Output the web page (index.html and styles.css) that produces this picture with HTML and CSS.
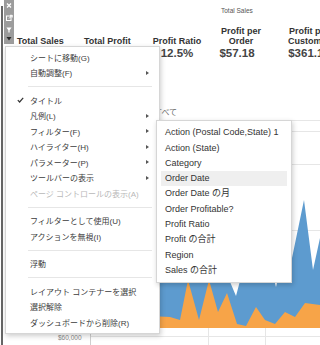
FILE: index.html
```html
<!DOCTYPE html>
<html>

<head>
  <meta charset="utf-8">
  <link rel="stylesheet" href="styles.css">
  <title>Sales Dashboard</title>
</head>

<body>
  <div class="dashboard">
    <div class="sheetTitle">Total Sales</div>
    <div class="kpis">
      <div class="kpi kpiSales">
        <div class="kpiLabel">Total Sales</div>
        <div class="kpiValue"></div>
      </div>
      <div class="kpi kpiProfit">
        <div class="kpiLabel">Total Profit</div>
        <div class="kpiValue"></div>
      </div>
      <div class="kpi kpiRatio">
        <div class="kpiLabel">Profit Ratio</div>
        <div class="kpiValue">12.5%</div>
      </div>
      <div class="kpi kpiOrder">
        <div class="kpiLabel">Profit per<br>Order</div>
        <div class="kpiValue">$57.18</div>
      </div>
      <div class="kpi kpiCustomer">
        <div class="kpiLabel">Profit per<br>Customer</div>
        <div class="kpiValue">$361.18</div>
      </div>
    </div>
    <div class="legendRow">すべて</div>
    <svg class="chart" width="317" height="225" viewBox="3 120 317 225">
      <g stroke="#e6e6e6" stroke-width="1">
        <line x1="90" y1="120.5" x2="320" y2="120.5" />
        <line x1="90" y1="131.5" x2="320" y2="131.5" />
        <line x1="90" y1="164.5" x2="320" y2="164.5" />
        <line x1="90" y1="230.5" x2="320" y2="230.5" />
        <line x1="90" y1="336.5" x2="320" y2="336.5" />
        <line x1="208.5" y1="328" x2="208.5" y2="345" />
        <line x1="265.5" y1="328" x2="265.5" y2="345" />
      </g>
      <line x1="90.5" y1="120" x2="90.5" y2="345" stroke="#cfcfcf" />
      <path fill="#5d9bcf"
        d="M150 270 L175 262 L190 255 L200 250 L212 262 L225 270 L236 296 L245 262 L258 268 L270 265 L276 287 L282 262 L292 258 L304 200 L313 270 L320 238 L320 328 L150 328 Z" />
      <path fill="#f7a448"
        d="M150 316 L170 317 L180 320 L188 280 L199 320 L209 280 L218 312 L227 293 L237 324 L246 326 L256 307 L265 320 L275 324 L285 312 L295 317 L305 303 L320 305 L320 328 L150 328 Z" />
      <text x="58" y="339.5" class="axisLabel">$60,000</text>
    </svg>
  </div>

  <div class="zoneToolbar">
    <svg width="10" height="44" viewBox="0 0 10 44">
      <path d="M3 3.5 L7 7.5 M7 3.5 L3 7.5" stroke="#fff" stroke-width="1.3" />
      <rect x="2.5" y="16" width="4.5" height="4.5" fill="none" stroke="#fff" stroke-width="1" />
      <path d="M5 18.5 L8 15.5 M6 15.3 H8.2 V17.5" fill="none" stroke="#fff" stroke-width="1" />
      <path d="M2.4 27.6 H7.6 L5.6 30.2 V32.6 H4.4 V30.2 Z" fill="#fff" />
      <path d="M2.5 37 H7.5 L5 40.6 Z" fill="#2b2b2b" />
    </svg>
  </div>

  <ul class="menu mainMenu">
    <li class="item"><span class="check"></span>シートに移動(G)</li>
    <li class="item"><span class="check"></span>自動調整(F)<span class="arrow"></span></li>
    <li class="sep"></li>
    <li class="item"><span class="check">
        <svg width="7" height="6" viewBox="0 0 7 6">
          <path d="M0.8 3.2 L2.6 5 L6.2 0.8" fill="none" stroke="#333" stroke-width="1.2" />
        </svg></span>タイトル</li>
    <li class="item"><span class="check"></span>凡例(L)<span class="arrow"></span></li>
    <li class="item"><span class="check"></span>フィルター(F)<span class="arrow"></span></li>
    <li class="item"><span class="check"></span>ハイライター(H)<span class="arrow"></span></li>
    <li class="item"><span class="check"></span>パラメーター(P)<span class="arrow"></span></li>
    <li class="item"><span class="check"></span>ツールバーの表示<span class="arrow"></span></li>
    <li class="item disabled"><span class="check"></span>ページ コントロールの表示(A)</li>
    <li class="sep"></li>
    <li class="item"><span class="check"></span>フィルターとして使用(U)</li>
    <li class="item"><span class="check"></span>アクションを無視(I)</li>
    <li class="sep"></li>
    <li class="item"><span class="check"></span>浮動</li>
    <li class="sep"></li>
    <li class="item"><span class="check"></span>レイアウト コンテナーを選択</li>
    <li class="item"><span class="check"></span>選択解除</li>
    <li class="item"><span class="check"></span>ダッシュボードから削除(R)</li>
  </ul>

  <ul class="menu subMenu">
    <li class="subItem">Action (Postal Code,State) 1</li>
    <li class="subItem">Action (State)</li>
    <li class="subItem">Category</li>
    <li class="subItem active">Order Date</li>
    <li class="subItem">Order Date の月</li>
    <li class="subItem">Order Profitable?</li>
    <li class="subItem">Profit Ratio</li>
    <li class="subItem">Profit の合計</li>
    <li class="subItem">Region</li>
    <li class="subItem">Sales の合計</li>
  </ul>
</body>

</html>
```

FILE: styles.css
```css
html,
body {
  margin: 0;
  padding: 0;
}

body {
  width: 320px;
  height: 345px;
  overflow: hidden;
  position: relative;
  background: #fff;
  font-family: "Liberation Sans", "Noto Sans CJK JP", sans-serif;
  color: #333;
}

.dashboard {
  margin-left: 1px;
  border-left: 2px solid #666;
  height: 345px;
}

.sheetTitle {
  margin-top: 6px;
  height: 10px;
  line-height: 10px;
  font-size: 6.5px;
  color: #555;
  padding-left: 218px;
}

.kpis {
  display: flex;
  margin-top: 10px;
  padding-left: 14px;
  width: 400px;
}

.kpi {
  flex: none;
  display: flex;
  flex-direction: column;
}

.kpiLabel {
  height: 20px;
  display: flex;
  flex-direction: column;
  justify-content: flex-end;
  font-size: 9px;
  line-height: 10px;
  font-weight: bold;
  color: #333;
  white-space: nowrap;
}

.kpiValue {
  height: 14px;
  line-height: 14px;
  font-size: 11.5px;
  font-weight: bold;
  color: #444;
  white-space: nowrap;
}

.kpiSales {
  width: 67px;
}

.kpiProfit {
  width: 68px;
}

.kpiRatio {
  width: 50px;
  text-align: center;
}

.kpiOrder {
  width: 78px;
  text-align: center;
}

.kpiCustomer {
  width: 58px;
  text-align: center;
}

.kpiOrder .kpiLabel,
.kpiRatio .kpiLabel,
.kpiCustomer .kpiLabel {
  align-items: center;
}

.kpiOrder .kpiValue {
  padding-right: 8px;
}

.legendRow {
  box-sizing: border-box;
  height: 60px;
  padding-top: 48px;
  padding-left: 151px;
  font-size: 8px;
  line-height: 10px;
  color: #666;
}

.chart {
  display: block;
}

.axisLabel {
  font-size: 6.5px;
  fill: #888;
}

.zoneToolbar {
  position: absolute;
  left: 4px;
  top: 0;
  width: 10px;
  height: 44px;
  background: #9c9c9c;
}

.zoneToolbar svg {
  display: block;
}

.menu {
  position: absolute;
  margin: 0;
  list-style: none;
  box-sizing: border-box;
  background: #fff;
  border: 1px solid #d6d6d6;
  box-shadow: 1px 2px 5px rgba(0, 0, 0, 0.2);
}

.mainMenu {
  left: 5px;
  top: 46px;
  width: 155px;
  padding: 2.5px 0 3px;
  font-size: 8px;
  color: #3c3c3c;
}

.item {
  display: flex;
  align-items: center;
  height: 15.5px;
  padding: 0 10px 0 11px;
  white-space: nowrap;
}

.item.disabled {
  color: #b8b8b8;
}

.check {
  flex: none;
  width: 13px;
  display: flex;
  align-items: center;
}

.check svg {
  display: block;
}

.arrow {
  margin-left: auto;
  width: 0;
  height: 0;
  border-left: 3px solid #555;
  border-top: 2.5px solid transparent;
  border-bottom: 2.5px solid transparent;
}

.sep {
  height: 0;
  margin: 5.5px 7px 5.5px 22px;
  border-top: 1px solid #e6e6e6;
}

.subMenu {
  left: 156px;
  top: 120px;
  width: 136px;
  padding: 4.3px 0 3.7px;
  font-size: 9px;
  color: #333;
}

.subItem {
  height: 15.3px;
  line-height: 15.3px;
  margin: 0 4px;
  padding: 0 4px;
  white-space: nowrap;
}

.subItem.active {
  background: #efefef;
}
```
